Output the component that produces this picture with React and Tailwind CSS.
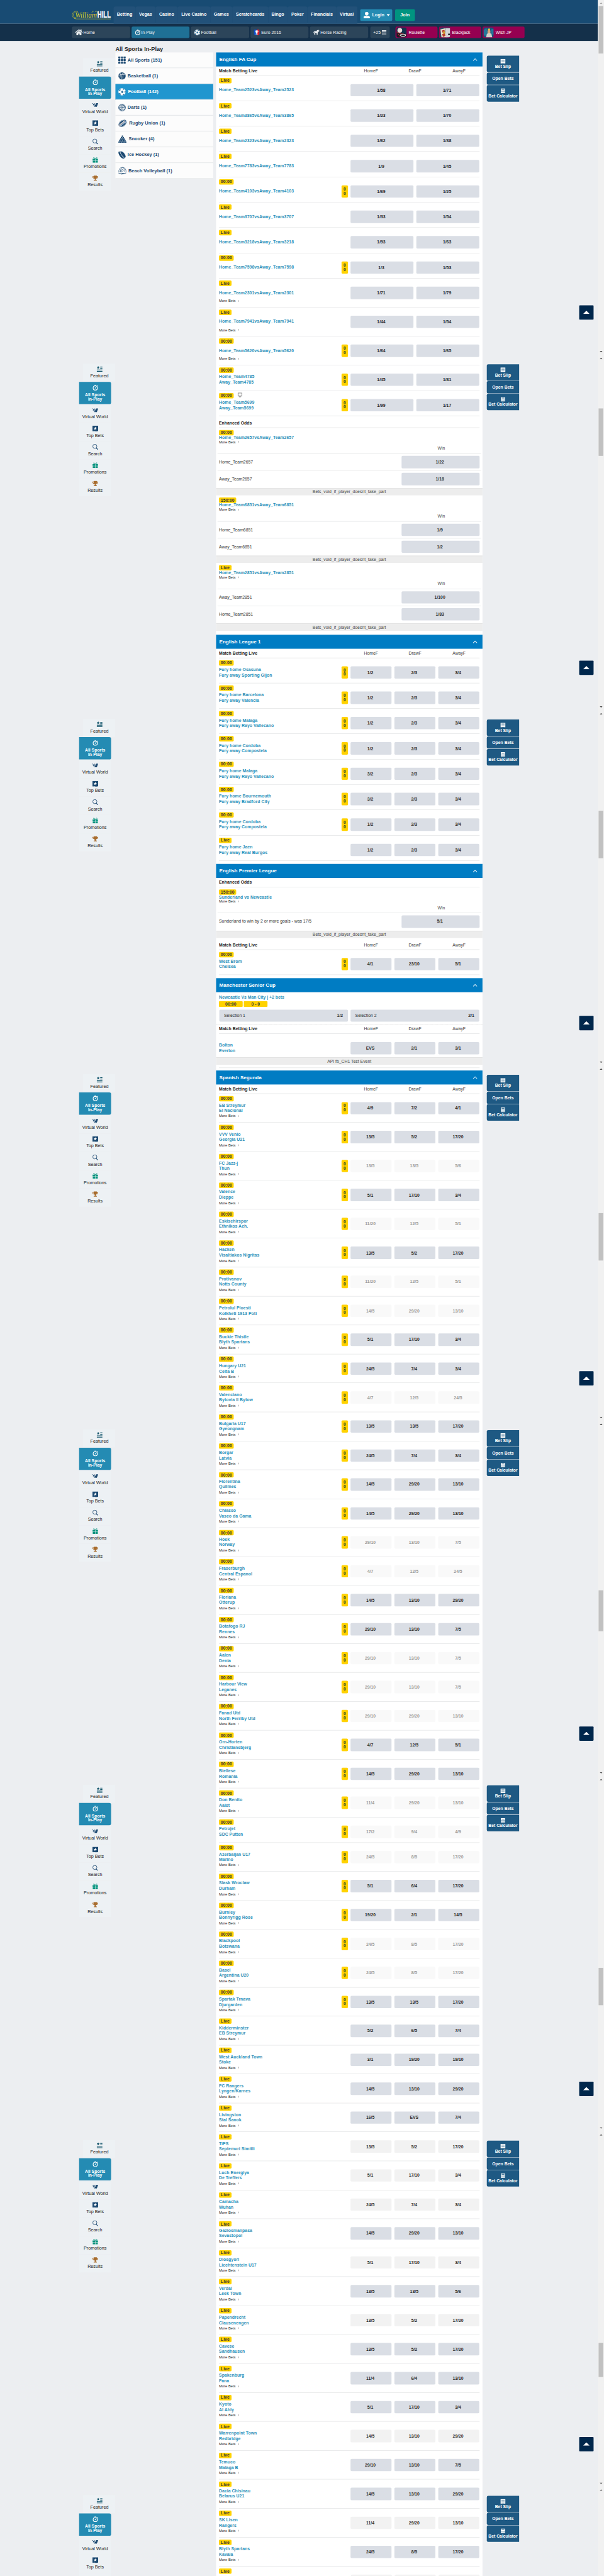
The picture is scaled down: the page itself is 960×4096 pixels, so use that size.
import React from "react";
import { FaHorse, FaTrophy, FaUserAlt, FaHome } from "react-icons/fa";

/* ---------- icons ---------- */

const Stopwatch = ({ className }) => (
  <svg viewBox="0 0 16 16" className={className} fill="none" stroke="currentColor">
    <circle cx="8" cy="9" r="5.9" strokeWidth="2" />
    <path d="M8.2 9.2 11 6" strokeWidth="1.8" />
    <circle cx="7.8" cy="9.4" r="1.2" fill="currentColor" stroke="none" />
    <path d="M6 1h4M13 2.2l2 1.8" strokeWidth="1.8" />
  </svg>
);

const Football = ({ className }) => (
  <svg viewBox="0 0 22 22" className={className}>
    <circle cx="11" cy="11" r="10.6" fill="currentColor" />
    <g className="fill-[#2c6f9c]">
      <path d="M2.500 5.500 5.500 3 7 5.500 5 8.500 1.800 9z" />
      <path d="M13.500 1 17.500 2.800 17 5 13 4.200z" />
      <path d="M9 8.800 13 8 15 11.500 12.500 14.800 8.600 13.200z" />
      <path d="M18.500 9.500 21.400 9 21.400 13.500 18.800 14z" />
      <path d="M2 14.500 5.500 14.800 7.500 18.500 6 20.500 3 18z" />
      <path d="M13 18.500 17 17.200 17.500 19.200 13.800 21.200z" />
    </g>
  </svg>
);

const GridIcon = () => (
  <svg viewBox="0 0 22 22" className="h-[21px] w-[21px]" fill="currentColor">
    {[0, 7.7, 15.4].map((y) => [0, 7.7, 15.4].map((x) => <rect key={x + "-" + y} x={x} y={y} width="6.2" height="6" rx="1.6" />))}
  </svg>
);

const Basketball = () => (
  <svg viewBox="0 0 22 22" className="h-[21px] w-[21px]">
    <circle cx="11" cy="11" r="10.6" fill="currentColor" />
    <g fill="none" stroke="#fcfcfc" strokeWidth="1.2">
      <path d="M14 .6C10 6 8 14 9.5 21.6M17.5 2.5C13.5 7 12.2 14 14 21M.6 9.5C7 6 14 5 21 8M5.5 2C6.5 4 6 14 4 19" />
    </g>
  </svg>
);

const Darts = () => (
  <svg viewBox="0 0 22 22" className="h-[21px] w-[21px]" fill="none" stroke="currentColor">
    <circle cx="11" cy="11" r="10" strokeWidth="1.4" />
    <circle cx="11" cy="11" r="7.6" strokeWidth="2.2" strokeDasharray="2.2 1.6" />
    <circle cx="11" cy="11" r="4.4" strokeWidth="1.6" strokeDasharray="1.6 1.2" />
    <circle cx="11" cy="11" r="1.4" fill="currentColor" stroke="none" />
    <path d="M11 1v20M1 11h20M4 4l14 14M18 4 4 18" strokeWidth=".7" />
  </svg>
);

const Rugby = () => (
  <svg viewBox="0 0 25 22" className="h-[21px] w-[24px]">
    <g transform="rotate(-38 12.5 11)">
      <ellipse cx="12.5" cy="11" rx="13" ry="9" fill="currentColor" />
      <rect x="1" y="7.8" width="23" height="6.4" fill="#fcfcfc" />
      <path d="M3 5.5C8 2.6 17 2.6 22 5.5M3 16.5c5 2.9 14 2.9 19 0" fill="none" stroke="#fcfcfc" strokeWidth="1.1" />
      <text x="12.5" y="13.4" textAnchor="middle" fontSize="6.6" fontWeight="700" fontFamily="Liberation Sans" fill="currentColor">UNION</text>
    </g>
  </svg>
);

const Snooker = () => (
  <svg viewBox="0 0 24 22" className="h-[21px] w-[23px]" fill="currentColor">
    {[0, 1, 2, 3, 4].map((r) =>
      Array.from({ length: r + 1 }, (_, i) => <circle key={r + "-" + i} cx={12 - r * 2.4 + i * 4.8} cy={2.3 + r * 4.3} r="2.3" />)
    )}
  </svg>
);

const Puck = () => (
  <svg viewBox="0 0 22 22" className="h-[21px] w-[21px]">
    <path d="M4 .8C1-.2-.4 3 1 7c2 6 7 12.500 11.500 14.200L16 22l5.200-4.600c1-3-1-7-4-11.400C14 2.500 10.500.3 8.500.2z" fill="currentColor" />
    <path d="M5 1.500C6 7 11.500 15.500 17.500 19" fill="none" stroke="#fcfcfc" strokeWidth="1.600" />
  </svg>
);

const Volleyball = () => (
  <svg viewBox="0 0 24 22" className="h-[21px] w-[23px]" fill="none" stroke="currentColor" strokeWidth="1.3">
    <path d="M1.500 14C1 6 6 1 12 1s11 5 10.500 13M6 14C6 8 8 4 12 1M10 14c0-4 .5-6 2-8M12 6l8 8M12 1c4 2 7 6 7.500 9M3 14h4M11 11l3 3" />
    <path d="M.5 17.500c4 1.500 7 0 10 .5s7 1 12.500-.8M8 21.500c3-1.500 6-1.200 9-1.800" strokeWidth="1.600" />
  </svg>
);

const Featured = () => (
  <svg viewBox="0 0 16 16" className="h-4 w-4 text-[#0b4f66]" fill="currentColor">
    <path d="M4.200 0 5.300 2.700 8.400 2.900 6 4.900 6.800 8 4.200 6.300 1.600 8 2.400 4.900 0 2.900 3.100 2.700z" />
    <path d="M9.800 1.800H16v2H9.800zM9.800 5.800H16v2H9.800zM0 9.900h16v2H0zM0 13.900h16v2H0z" />
  </svg>
);

const Virtual = () => (
  <svg viewBox="0 0 16 10" className="h-4 w-4 text-[#1d4a72]" fill="currentColor">
    <path d="M10 0h6l-3.600 10H8L6.500 6l2-1z" />
    <path d="M0 0h2v2H0zM4 0h2v2H4zM2 2h2v2H2zM6 2h2v2H6zM1.500 4h2v2h-2zM4.500 4h2v2h-2zM3.500 6h2v2h-2zM5.500 8h2v2h-2z" />
  </svg>
);

const TopBets = () => (
  <svg viewBox="0 0 16 16" className="h-4 w-4" fill="#1d4a72">
    <path d="M0 0h16v16l-2-1.500L12 16l-2-1.500L8 16l-2-1.500L4 16l-2-1.500L0 16z" />
    <path d="M8 2.800 9.300 6 12.600 6.200 10 8.300 10.900 11.500 8 9.700 5.100 11.500 6 8.300 3.400 6.200 6.700 6z" fill="#fff" />
  </svg>
);

const SearchIcon = () => (
  <svg viewBox="0 0 16 16" className="h-4 w-4" fill="none" stroke="#1d4a72">
    <circle cx="6.800" cy="6.500" r="5.700" strokeWidth="1.500" />
    <path d="m10.600 11 4.600 4.400" strokeWidth="2" />
  </svg>
);

const Gift = () => (
  <svg viewBox="0 0 16 16" className="h-4 w-4" fill="#00937d">
    <path d="M.5 5h7v4.800h-7zM8.500 5h7v4.800h-7zM1 10.800h6.500V16H1zM8.500 10.800H15V16H8.500z" />
    <path d="M8 4.500C5 .5 2.500.5 3 2.500S7 4 8 4.500s4.500 0 5-2-2-2-5 2z" fill="none" stroke="#00937d" strokeWidth="1.100" />
  </svg>
);

const Receipt = () => (
  <svg viewBox="0 0 14 13" className="h-[13px] w-[14px]">
    <path d="M0 0h14v13l-2-1-1.500 1L9 12l-2 1-2-1-1.500 1L2 12l-2 1z" fill="#fff" />
    <path d="M2.500 3h9M2.500 5.700h9M2.500 8.400h9" stroke="#1e5982" strokeWidth="1" />
  </svg>
);

const Calculator = () => (
  <svg viewBox="0 0 12 13" className="h-[13px] w-[12px]">
    <rect width="12" height="13" rx="1" fill="#fff" />
    <path d="M2 2h8v2H2zM2 5.800h2v1.400H2zM5 5.800h2v1.400H5zM8 5.800h2v1.400H8zM2 8h2v1.400H2zM5 8h2v1.400H5zM8 8h2v1.400H8zM2 10.300h2v1.400H2zM5 10.300h2v1.400H5zM8 10.300h2v1.400H8z" fill="#1e5982" opacity=".8" />
  </svg>
);

const Logo = () => (
  <svg viewBox="0 0 110 36" className="h-[36px] w-[110px]">
    <g transform="translate(0 5)">
      <g fill="none" stroke="#e9d52a" strokeWidth="1">
        <path d="M12 2.500C5 2.500.8 8 1 13.500S6 23 11 22.500M10 5C5.500 6 3.500 10 4 14s4 6.500 7 5M12 2.500c4-1 6 2 4 5M64 4c3-3 7-2 6.500 2S66 14 68 17M6 21.500c2 2 5 2.300 9 2.300h93" />
        <path d="M60 3c-3-1-5 1-4 4" />
      </g>
      <text x="9" y="20.500" fontFamily="Liberation Serif" fontStyle="italic" fontSize="22" fill="#e9d52a" textLength="60" lengthAdjust="spacingAndGlyphs">William</text>
      <text x="71" y="20" fontFamily="Liberation Sans" fontWeight="700" fontSize="24" fill="#fff" stroke="#fff" strokeWidth=".5" textLength="37" lengthAdjust="spacingAndGlyphs">HILL</text>
    </g>
  </svg>
);

const EuroCup = () => (
  <svg viewBox="0 0 16 16" className="h-4 w-4">
    <rect width="16" height="16" rx="3.500" fill="#0b4fc8" />
    <path d="M8.500 0h4A3.500 3.500 0 0 1 16 3.500v9a3.500 3.500 0 0 1-3.500 3.500h-4z" fill="#d8202c" />
    <path d="M5.500 3h5v3.500c0 2-1 2.800-1.700 3.200V12h1.700v1.500h-5V12h1.700V9.700C6.500 9.300 5.500 8.500 5.500 6.500zM4 4v3l1.500 1M12 4v3l-1.500 1" fill="#fff" stroke="#fff" strokeWidth=".5" />
  </svg>
);

const RouletteArt = () => (
  <svg viewBox="0 0 28 28" className="h-7 w-7">
    <rect width="28" height="28" rx="5" fill="#12344d" />
    <path d="M0 13 28 20v3a5 5 0 0 1-5 5H5a5 5 0 0 1-5-5z" fill="#1d1a24" />
    <path d="M0 12 26 20l-1 2L0 15z" fill="#8d2733" />
    <circle cx="9" cy="8.500" r="6.500" fill="#e9dcd8" />
    <ellipse cx="18" cy="22" rx="7" ry="3" fill="none" stroke="#f1f1f1" strokeWidth="2" />
    <path d="M5 19l4 6" stroke="#b8303c" strokeWidth="2" />
  </svg>
);

const BlackjackArt = () => (
  <svg viewBox="0 0 28 28" className="h-7 w-7">
    <rect width="28" height="28" rx="5" fill="#27506b" />
    <path d="M1 6 14 3l4 25H4z" fill="#e8dfc8" />
    <path d="M15 3h13v20a5 5 0 0 1-5 5h-6z" fill="#d3d3d6" />
    <path d="M5 9l7-2 2 6-6 4zM6 19l7-3 2 8-7 3z" fill="#b63a2c" />
    <path d="M8 12l5-1 1 6-5 2z" fill="#d7a531" />
    <path d="M25 16c3 3 3 5 1.500 6H23c-1.500-1-1-3 2-6z" fill="#1a1a1a" />
  </svg>
);

const WishArt = () => (
  <svg viewBox="0 0 28 28" className="h-7 w-7">
    <rect width="28" height="28" rx="5" fill="#14567c" />
    <path d="M0 8l8-6 3 12-6 10-5-2zM20 6l8-2v18l-6-4z" fill="#2a86a8" opacity=".7" />
    <path d="M11 10c0-4 8-4 8 0v5c-1 4-7 4-8 0z" fill="#d9a67c" />
    <path d="M12 7l1-4 2 2 2-3 1 4v2h-6z" fill="#f0c93a" />
    <path d="M9 18c4-2 9-2 13 0l2 10H7z" fill="#d5cfc9" />
  </svg>
);

/* ---------- header ---------- */

const NAV = [
  ["Betting", "w-[61px]"], ["Vegas", "w-[56px]"], ["Casino", "w-[61px]"], ["Live Casino", "w-[91px]"], ["Games", "w-[61px]"],
  ["Scratchcards", "w-[99.5px]"], ["Bingo", "w-[54.5px]"], ["Poker", "w-[55px]"], ["Financials", "w-[80.5px]"], ["Virtual", "w-[58px]"],
];

const Shortcut = ({ icon, label, active }) => (
  <div className={"flex h-8 w-[161.5px] shrink-0 items-center gap-[2px] rounded-[4px] pl-[9px] text-[12px] text-[#eef1f3] " + (active ? "bg-[#1f7095]" : "bg-[#2c455a]")}>
    {icon}
    <span>{label}</span>
  </div>
);

const GameLink = ({ art, label }) => (
  <div className="flex h-8 w-[117px] shrink-0 items-center gap-[6px] rounded-[4px] bg-[#950051] pl-[3px] text-[12px] text-white">
    {art}
    <span>{label}</span>
  </div>
);

const Header = () => (
  <header>
    <div className="flex h-[66px] bg-[#184b73] pl-[200px]">
      <div className="w-[116px] pt-[24px]"><Logo /></div>
      <nav className="flex pt-[18px]">
        {NAV.map(([label, w]) => (
          <div key={label} className={"flex h-12 items-center justify-center whitespace-nowrap rounded-t-[5px] bg-[#225179] pb-[3px] text-[12.5px] font-bold text-white " + w}>{label}</div>
        ))}
      </nav>
      <div className="ml-[8.500px] mt-[26px] flex h-8 w-[89px] items-center rounded-[3px] bg-[#248bb3] pl-[9px] text-[12.5px] font-bold text-white">
        <FaUserAlt className="h-[18px] w-[18px]" />
        <span className="ml-[6px]">Login</span>
        <svg viewBox="0 0 10 6" className="ml-[6px] h-[6px] w-[10px]"><path d="M0 0h10L5 6z" fill="#fff" /></svg>
      </div>
      <div className="ml-2 mt-[26px] flex h-8 w-[55px] items-center justify-center rounded-[3px] bg-[#009480] text-[12.5px] font-bold text-white">Join</div>
    </div>
    <div className="flex h-12 items-center bg-[#14304a] pl-[200px]">
      <div className="flex gap-[4px]">
        <Shortcut icon={<FaHome className="h-[20px] w-[21px]" />} label="Home" />
        <Shortcut icon={<Stopwatch className="h-4 w-4" />} label="In-Play" active />
        <Shortcut icon={<Football className="h-[17px] w-[17px]" />} label="Football" />
        <Shortcut icon={<><EuroCup /><i className="w-[1px]" /></>} label="Euro 2016" />
        <Shortcut icon={<FaHorse className="h-[14px] w-[18px]" />} label="Horse Racing" />
      </div>
      <div className="ml-[6px] flex h-8 w-[54px] items-center justify-center gap-[3px] rounded-[4px] bg-[#2c455a] text-[12px] text-[#eef1f3]">
        <span>+25</span>
        <svg viewBox="0 0 13 12" className="h-[12px] w-[13px]"><path d="M0 1h13M0 4.300h13M0 7.600h13M0 10.900h13" stroke="#eef1f3" strokeWidth="1.700" /></svg>
      </div>
      <div className="ml-4 flex gap-1">
        <GameLink art={<RouletteArt />} label="Roulette" />
        <GameLink art={<BlackjackArt />} label="Blackjack" />
        <GameLink art={<WishArt />} label="Wish JP" />
      </div>
    </div>
  </header>
);

/* ---------- side rails ---------- */

const FRAMES = [0, 1, 2, 3, 4, 5, 6, 7];

const RailItem = ({ icon, label, className = "" }) => (
  <div className={"mb-px flex h-[50px] w-[89px] flex-col items-center bg-[#edf1f4] pt-[7px] text-[12.6px] text-[#222] " + className}>
    {icon}
    <span className="mt-[4px] whitespace-nowrap leading-[15px]">{label}</span>
  </div>
);

const LeftMenu = ({ short }) => (
  <div>
    <RailItem icon={<Featured />} label="Featured" className="ml-[11px] pl-[2px]" />
    <div className="mb-[2px] flex h-[62px] w-[89px] flex-col items-center rounded-r-[5px] bg-[#248bb3] pt-[8px] text-[12px] font-bold leading-[12px] text-white">
      <Stopwatch className="mb-[6px] h-4 w-4" />
      <span>All Sports</span>
      <span>In-Play</span>
    </div>
    <RailItem icon={<Virtual />} label="Virtual World" />
    <RailItem icon={<TopBets />} label="Top Bets" />
    {short ? (
      <div className="h-[8px] w-[89px] bg-[#edf1f4]" />
    ) : (
      <>
        <RailItem icon={<SearchIcon />} label="Search" />
        <RailItem icon={<Gift />} label="Promotions" />
        <RailItem icon={<FaTrophy className="h-4 w-4 text-[#a86c2d]" />} label="Results" />
      </>
    )}
  </div>
);

const LeftRail = () => (
  <aside className="w-[321px] shrink-0 pl-[220px]">
    {FRAMES.map((f) => (
      <div key={f} className={f === 0 ? "h-[875px] pt-[48px]" : f === 7 ? "pt-[23px]" : "h-[989px] pt-[23px]"}><LeftMenu short={f === 7} /></div>
    ))}
  </aside>
);

const BetTools = () => (
  <div className="flex w-[90px] flex-col gap-px text-[12px] font-bold text-white [&>div]:rounded-l-[4px] [&>div]:bg-[#1e5983]">
    <div className="flex h-[46px] flex-col items-center pt-[9px]"><Receipt /><span className="leading-[16px]">Bet Slip</span></div>
    <div className="flex h-[34px] items-center justify-center"><span>Open Bets</span></div>
    <div className="flex h-[46px] flex-col items-center pt-[9px]"><Calculator /><span className="leading-[16px]">Bet Calculator</span></div>
  </div>
);

const RightRail = () => (
  <aside className="flex-1 pl-[12px]">
    {FRAMES.map((f) => (
      <div key={f} className={"flex flex-col justify-between pb-[99px] " + (f === 0 ? "h-[875px] pt-[41px]" : "h-[989px] pt-[25px]")}>
        <BetTools />
        <div className="ml-[257px] flex h-[40px] w-[40px] items-center justify-center rounded-[2px] bg-[#00274c]">
          <svg viewBox="0 0 18 9" className="mb-[2px] h-[9px] w-[18px]"><path d="M9 0 18 9H0z" fill="#fff" /></svg>
        </div>
      </div>
    ))}
  </aside>
);

/* offset of the thumb below the up arrow, and its length, per viewport */
const THUMBS = [[0, 132], [131, 132], [262, 132], [393, 132], [454, 114], [516, 104], [571, 95], [620, 88]];

const Scrollbar = () => (
  <div className="flex w-[17px] shrink-0 flex-col items-center bg-[#f1f1f1]">
    {THUMBS.map(([top, height], f) => (
      <div key={f} className="flex h-[989px] w-full shrink-0 flex-col items-center pb-[8px] pt-[7px]">
        <svg viewBox="0 0 8 4" className={"mb-[6px] h-[4px] w-[8px] shrink-0 " + (f === 0 ? "text-[#a3a3a3]" : "text-[#505050]")}><path d="M4 0l4 4H0z" fill="currentColor" /></svg>
        <div className="w-[13px] shrink-0 bg-[#c1c1c1]" style={{ marginTop: top, height }} />
        {f < 7 && <svg viewBox="0 0 8 4" className="mt-auto h-[4px] w-[8px] shrink-0 text-[#505050]"><path d="M0 0h8L4 4z" fill="currentColor" /></svg>}
      </div>
    ))}
  </div>
);

/* ---------- sports list ---------- */

const SPORTS = [
  [<GridIcon />, "All Sports (151)", "gap-[5px]"],
  [<Basketball />, "Basketball (1)", "gap-[5px]"],
  [<Football className="h-[21px] w-[21px]" />, "Football (142)", "gap-[6px]"],
  [<Darts />, "Darts (1)", "gap-[5px]"],
  [<Rugby />, "Rugby Union (1)", "gap-[6px]"],
  [<Snooker />, "Snooker (4)", "gap-[6px]"],
  [<Puck />, "Ice Hockey (1)", "gap-[5px]"],
  [<Volleyball />, "Beach Volleyball (1)", "gap-[5px]"],
];

const SportsList = () => (
  <div className="w-[272px] shrink-0">
    <h1 className="flex h-[32px] items-end pb-0 text-[16px] font-bold leading-[18px] text-[#2b2b2b]">All Sports In-Play</h1>
    {SPORTS.map(([icon, label, gap], i) => (
      <div key={label} className={"flex h-[44px] items-center border-b-2 border-[#e6e8ea] pl-[8px] text-[13px] font-bold " + gap + " " + (i === 2 ? "bg-[#2196cf] text-white" : "bg-[#fcfcfc] text-[#1d4a72]")}>
        {icon}
        <span>{label}</span>
      </div>
    ))}
  </div>
);

/* ---------- coupon ---------- */

const Badge = ({ children }) => (
  <span className="flex h-[15px] items-center rounded-[3px] bg-[#ffd200] px-[5px] text-[12px] font-bold text-[#333] tracking-[0.15px]">{children}</span>
);

const Odds = ({ children, tone = "", className = "" }) => (
  <div className={"flex items-center justify-center rounded-[3px] pr-[4px] text-[12px] font-bold " + (tone === "d" ? "bg-[#f9f9f9] text-[#9c9c9c] " : tone === "g" ? "bg-[#f2f2f2] text-[#2e2e2e] " : "bg-[#dadee5] text-[#2b2b2b] ") + className}>{children}</div>
);

const SectionTitle = ({ children }) => (
  <div className="flex h-[39px] items-center justify-between bg-[#007cc3] pl-[9px] pr-[14px] text-[14px] font-bold text-white">
    <h2>{children}</h2>
    <svg viewBox="0 0 14 8" className="h-[8px] w-[13px]"><path d="m1.200 7 5.800-5.600L12.800 7" fill="none" stroke="#e8f3fa" strokeWidth="2" /></svg>
  </div>
);

const ColumnHead = ({ title = "Match Betting Live", cols = true }) => (
  <div className="mx-[8px] flex h-[25.600px] items-center border-b border-[#dadcdd] text-[12px]">
    <span className="w-[366px] font-bold text-[#222]">{title}</span>
    {cols && (
      <div className="grid flex-1 grid-cols-3 gap-[8px] text-center text-[#3c3c3c]"><span>HomeF</span><span>DrawF</span><span>AwayF</span></div>
    )}
  </div>
);

const MoreBets = () => (
  <div className="flex h-[15px] items-center gap-[6px] text-[10.2px] text-[#222]">
    <span>More Bets</span>
    <svg viewBox="0 0 5 8" className="h-[6px] w-[4px]"><path d="m.8.8 3.400 3.200L.8 7.200" fill="none" stroke="#444" strokeWidth="1.200" /></svg>
  </div>
);

const Screen = () => (
  <svg viewBox="0 0 13 13" className="ml-[11px] mt-[-3px] h-[13px] w-[13px]"><path d="M1 1h11v8.500H1z" fill="none" stroke="#666" strokeWidth="1.500" /><path d="M4 11h5v1.600H4z" fill="#666" /></svg>
);

const Match = ({ clock, home, away, odds, tone, more, tv, last }) => (
  <div className={"mx-[8px] flex " + (last ? "h-[65.600px] " : "border-b border-[#dadcdd] " + (more ? "h-[80.590px]" : "h-[70.590px]"))}>
    <div className="w-[341px] pt-[6px]">
      <div className="flex h-[15px] items-center">{clock && <Badge>{clock}</Badge>}{tv && <Screen />}</div>
      <div className="mt-[4px] flex h-[30px] flex-col justify-center text-[12px] font-bold leading-[15px] tracking-[0.1px] text-[#2a8fb8]">
        <span>{home}</span>
        {away && <span>{away}</span>}
      </div>
      {more && <MoreBets />}
    </div>
    <div className="flex w-[25px] pt-[23px]">
      {clock && clock !== "Live" && (
        <div className="flex h-[34.500px] w-[18px] flex-col items-center justify-center rounded-[3px] bg-[#ffd200] pb-[1px] text-[12px] font-bold leading-[12px] text-[#333]"><span>0</span><span>0</span></div>
      )}
    </div>
    <div className={"mt-[23px] grid h-[34.500px] w-[358px] gap-[8px] " + (odds.length === 2 ? "grid-cols-2" : "grid-cols-3")}>
      {odds.map((o, i) => <Odds key={i} tone={tone}>{o}</Odds>)}
    </div>
  </div>
);

const Notice = ({ children }) => (
  <div className="flex h-[20.400px] items-center justify-center border-t border-[#dcdcdc] bg-[#ededed] text-[12px] text-[#4a4a4a]">{children}</div>
);

const EnhancedEvent = ({ clock, name, rows }) => (
  <div>
    <div className="px-[8px] pt-[6px]">
      <div className="flex h-[15px]"><Badge>{clock}</Badge></div>
      <div className="h-[12px] text-[12px] font-bold leading-[12px] tracking-[0.1px] text-[#2a8fb8]">{name}</div>
      <div className="-mt-px"><MoreBets /></div>
      <div className="ml-auto flex h-[24.500px] w-[217px] items-center justify-center pl-[4px] pb-[3px] text-[12px] text-[#4a4a4a]">Win</div>
    </div>
    {rows.map(([label, odd], i) => (
      <div key={label} className={"mx-[4px] flex border-t border-[#dadcdd] px-[4px] " + (i === rows.length - 1 ? "h-[49.500px]" : "h-[47px]")}>
        <div className="mt-[6px] flex h-[34px] flex-1 items-center text-[12px] text-[#333]">{label}</div>
        <Odds className="mt-[6px] h-[34.500px] w-[217px]">{odd}</Odds>
      </div>
    ))}
    <Notice>Bets_void_if_player_doesnt_take_part</Notice>
  </div>
);

const FA_CUP = [
  ["Live", "2523", "1/58", "1/71"], ["Live", "3865", "1/23", "1/70"], ["Live", "2323", "1/62", "1/38"], ["Live", "7783", "1/9", "1/45"],
  ["00:00", "4103", "1/69", "1/25"], ["Live", "3707", "1/33", "1/54"], ["Live", "3218", "1/93", "1/63"], ["00:00", "7598", "1/3", "1/53"],
  ["Live", "2301", "1/71", "1/79", true], ["Live", "7941", "1/44", "1/54", true], ["00:00", "5620", "1/64", "1/65", true],
];

const LEAGUE_ONE = [
  ["Osasuna", "Sporting Gijon", "1/2"], ["Barcelona", "Valencia", "1/2"], ["Malaga", "Rayo Vallecano", "1/2"], ["Cordoba", "Compostela", "1/2"],
  ["Malaga", "Rayo Vallecano", "3/2"], ["Bournemouth", "Bradford City", "3/2"], ["Cordoba", "Compostela", "1/2"], ["Jaen", "Real Burgos", "1/2"],
];

/* home | away | odds | tone: d = suspended, g = muted */
const SEGUNDA = [
  "EB Streymur|El Nacional|4/9 7/2 4/1|", "VVV Venlo|Georgia U21|13/5 5/2 17/20|", "FC Jazz-j|Thun|13/5 13/5 5/6|d", "Valence|Dieppe|5/1 17/10 3/4|",
  "Eskisehirspor|Ethnikos Ach.|11/20 12/5 5/1|d", "Hacken|Visaltiakos Nigritas|13/5 5/2 17/20|", "Protivanov|Notts County|11/20 12/5 5/1|d",
  "Petrolul Ploesti|Kolkheti 1913 Poti|14/5 29/20 13/10|d", "Buckie Thistle|Blyth Spartans|5/1 17/10 3/4|", "Hungary U21|Celta B|24/5 7/4 3/4|",
  "Valenciano|Bytovia II Bytow|4/7 12/5 24/5|d", "Bulgaria U17|Gyeongnam|13/5 13/5 17/20|", "Borgar|Latvia|24/5 7/4 3/4|", "Fiorentina|Quilmes|14/5 29/20 13/10|",
  "Chiasso|Vasco da Gama|14/5 29/20 13/10|", "Hoek|Norway|29/10 13/10 7/5|d", "Fraserburgh|Central Espanol|4/7 12/5 24/5|d", "Floriana|Otterup|14/5 13/10 29/20|",
  "Botafogo RJ|Rennes|29/10 13/10 7/5|", "Aalen|Denia|29/10 13/10 7/5|d", "Harbour View|Leganes|29/10 13/10 7/5|d", "Fanad Utd|North Ferriby Utd|29/10 29/20 13/10|d",
  "Orn-Horten|Christiansbjerg|4/7 12/5 5/1|", "Biellese|Romania|14/5 29/20 13/10|", "Don Benito|Aalst|11/4 29/20 13/10|d", "Petrojet|SDC Putten|17/2 9/4 4/9|d",
  "Azerbaijan U17|Marino|24/5 8/5 17/20|d", "Slask Wroclaw|Durham|5/1 6/4 17/20|", "Burnley|Bonnyrigg Rose|19/20 2/1 14/5|", "Blackpool|Botswana|24/5 8/5 17/20|d",
  "Basel|Argentina U20|24/5 8/5 17/20|d", "Spartak Trnava|Djurgarden|13/5 13/5 17/20|", "Kidderminster|EB Streymur|5/2 6/5 7/4|", "West Auckland Town|Stoke|3/1 19/20 19/10|",
  "FC Rangers|Lyngen/Karnes|14/5 13/10 29/20|", "Livingston|Stal Sanok|16/5 EVS 7/4|", "TiPS|Septemvri Simitli|13/5 5/2 17/20|g", "Luch Energiya|De Treffers|5/1 17/10 3/4|g",
  "Camacha|Wuhan|24/5 7/4 3/4|g", "Gaziosmanpasa|Sevastopol|14/5 29/20 13/10|", "Diosgyori|Liechtenstein U17|5/1 17/10 3/4|g", "Verdal|Leek Town|13/5 13/5 5/6|",
  "Papendrecht|Clausenengen|13/5 5/2 17/20|g", "Cavese|Sandhausen|13/5 5/2 17/20|", "Spakenburg|Fana|11/4 6/4 13/10|", "Kyoto|Al Ahly|5/1 17/10 3/4|",
  "Warrenpoint Town|Redbridge|14/5 13/10 29/20|g", "Temuco|Malaga B|29/10 13/10 7/5|", "Dacia Chisinau|Belarus U21|14/5 13/10 29/20|", "SK Lisen|Rangers|11/4 29/20 13/10|g",
  "Blyth Spartans|Kavala|24/5 8/5 17/20|",
].map((s) => s.split("|"));

const Selection = ({ label, odd }) => (
  <div className="flex h-[32.500px] w-[358px] items-center justify-between rounded-[3px] bg-[#dadee5] pl-[13px] pr-[14px] text-[12px] text-[#333]">
    <span>{label}</span>
    <b>{odd}</b>
  </div>
);

const Coupon = () => (
  <div className="mt-[32px] w-[741px] shrink-0 bg-white">
    <section className="h-[1621px]">
      <SectionTitle>English FA Cup</SectionTitle>
      <ColumnHead />
      {FA_CUP.map(([clock, id, a, b, more]) => (
        <Match key={id} clock={clock} home={"Home_Team" + id + "vsAway_Team" + id} odds={[a, b]} more={more} />
      ))}
      <Match clock="00:00" home="Home_Team4785" away="Away_Team4785" odds={["1/45", "1/81"]} />
      <Match clock="00:00" home="Home_Team5699" away="Away_Team5699" odds={["1/99", "1/17"]} tv />
      <div className="h-[7px]" />
      <ColumnHead title="Enhanced Odds" cols={false} />
      <EnhancedEvent clock="00:00" name="Home_Team2657vsAway_Team2657" rows={[["Home_Team2657", "1/22"], ["Away_Team2657", "1/18"]]} />
      <EnhancedEvent clock="150:00" name="Home_Team6851vsAway_Team6851" rows={[["Home_Team6851", "1/9"], ["Away_Team6851", "1/2"]]} />
      <EnhancedEvent clock="Live" name="Home_Team2851vsAway_Team2851" rows={[["Away_Team2851", "1/100"], ["Home_Team2851", "1/83"]]} />
    </section>

    <section className="h-[638px]">
      <SectionTitle>English League 1</SectionTitle>
      <ColumnHead />
      {LEAGUE_ONE.map(([h, a, o], i) => (
        <Match key={i} clock={i === 7 ? "Live" : "00:00"} home={"Fury home " + h} away={"Fury away " + a} odds={[o, "2/3", "3/4"]} />
      ))}
    </section>

    <section className="h-[318px]">
      <SectionTitle>English Premier League</SectionTitle>
      <ColumnHead title="Enhanced Odds" cols={false} />
      <EnhancedEvent clock="150:00" name="Sunderland vs Newcastle" rows={[["Sunderland to win by 2 or more goals - was 17/5", "5/1"]]} />
      <div className="h-[7px]" />
      <ColumnHead />
      <Match clock="00:00" home="West Brom" away="Chelsea" odds={["4/1", "23/10", "5/1"]} />
    </section>

    <section className="h-[257px]">
      <SectionTitle>Manchester Senior Cup</SectionTitle>
      <div className="h-[90px] border-b border-dotted border-[#bbb] px-[8px] pt-[7px]">
        <div className="text-[12px] font-bold leading-[16px] text-[#2a8fb8]">Newcastle Vs Man City | +2 bets</div>
        <div className="mt-[2px] flex gap-[3px] text-[12px] font-bold text-[#333] [&>span]:flex [&>span]:h-[16px] [&>span]:w-[66px] [&>span]:items-center [&>span]:justify-center [&>span]:rounded-[2px] [&>span]:bg-[#ffd200]">
          <span>00:00</span>
          <span>0 - 0</span>
        </div>
        <div className="mt-[8px] flex gap-[7px] pl-px">
          <Selection label="Selection 1" odd="1/2" />
          <Selection label="Selection 2" odd="2/1" />
        </div>
      </div>
      <ColumnHead />
      <Match home="Bolton" away="Everton" odds={["EVS", "2/1", "3/1"]} last />
      <Notice>API fb_CH1 Test Event</Notice>
      <div className="mx-[8px] h-[9px] border-b border-[#dadcdd]" />
    </section>

    <section>
      <SectionTitle>Spanish Segunda</SectionTitle>
      <ColumnHead />
      {SEGUNDA.map(([h, a, o, tone], i) => (
        <Match key={i} clock={i < 32 ? "00:00" : "Live"} home={h} away={a} odds={o.split(" ")} tone={tone} more={i !== 25} />
      ))}
      <div className="mx-[8px] flex h-[27px] justify-between pt-[6px]">
        <div className="flex h-[15px]"><Badge>Live</Badge></div>
        <div className="mt-[17px] grid h-[4px] w-[358px] grid-cols-3 gap-[8px] [&>i]:rounded-t-[3px] [&>i]:bg-[#f2f2f2]"><i /><i /><i /></div>
      </div>
    </section>
  </div>
);

export default function App() {
  return (
    <div className="h-[4096px] w-[960px] overflow-hidden">
      <div className="flex h-[7171px] w-[1680px] origin-top-left overflow-hidden bg-[#eceef1] font-['Liberation_Sans',Arial,sans-serif] [transform:scale(0.571429,0.571189)]">
        <div className="w-[1663px] shrink-0">
          <Header />
          <main className="flex">
            <LeftRail />
            <SportsList />
            <div className="w-[8px] shrink-0" />
            <Coupon />
            <RightRail />
          </main>
        </div>
        <Scrollbar />
      </div>
    </div>
  );
}
